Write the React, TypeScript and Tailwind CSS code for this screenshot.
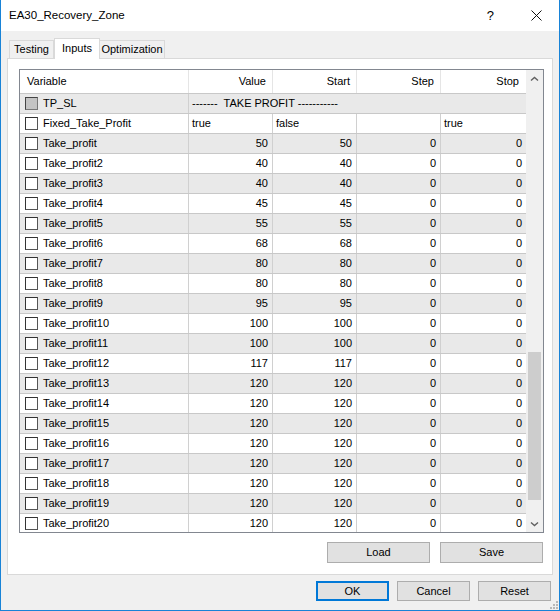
import React from "react";

type Row = { name: string; value: string; start: string; step: string; stop: string; text?: boolean };

const tp: [string, number][] = [
  ["Take_profit", 50],
  ["Take_profit2", 40],
  ["Take_profit3", 40],
  ["Take_profit4", 45],
  ["Take_profit5", 55],
  ["Take_profit6", 68],
  ["Take_profit7", 80],
  ["Take_profit8", 80],
  ["Take_profit9", 95],
  ["Take_profit10", 100],
  ["Take_profit11", 100],
  ["Take_profit12", 117],
  ["Take_profit13", 120],
  ["Take_profit14", 120],
  ["Take_profit15", 120],
  ["Take_profit16", 120],
  ["Take_profit17", 120],
  ["Take_profit18", 120],
  ["Take_profit19", 120],
  ["Take_profit20", 120],
];

const rows: Row[] = [
  { name: "Fixed_Take_Profit", value: "true", start: "false", step: "", stop: "true", text: true },
  ...tp.map(([n, v]) => ({ name: n, value: String(v), start: String(v), step: "0", stop: "0" })),
];

function Check({ gray }: { gray?: boolean }) {
  return (
    <div
      className={
        gray
          ? "w-[13px] h-[13px] shrink-0 border border-t-[#444] border-l-[#444] border-r-[#777] border-b-[#777] bg-[#c4c4c4]"
          : "w-[13px] h-[13px] shrink-0 border border-t-[#333] border-l-[#333] border-r-[#555] border-b-[#555] bg-white"
      }
    />
  );
}

function Chevron({ down }: { down?: boolean }) {
  return (
    <svg width="9" height="6" viewBox="0 0 9 6">
      <path
        d={down ? "M1 1.5 L4.5 4.5 L8 1.5" : "M1 4.5 L4.5 1.5 L8 4.5"}
        fill="none"
        stroke="#606060"
        strokeWidth="1.4"
      />
    </svg>
  );
}

export default function App() {
  return (
    <div className="relative w-[560px] h-[611px] flex flex-col border-x border-b border-[#1883d7] bg-[#f0f0f0] font-['Liberation_Sans',Arial,sans-serif] text-[11px] text-black overflow-hidden">
      {/* Title bar */}
      <div className="h-[31px] shrink-0 bg-white flex items-center pl-[8px] pr-[17px]">
        <span className="text-[11.5px]">EA30_Recovery_Zone</span>
        <div className="flex-1" />
        <span className="text-[13px] mr-[37px] leading-none">?</span>
        <svg width="11" height="11" viewBox="0 0 11 11">
          <path d="M0.5 0.5 L10.5 10.5 M10.5 0.5 L0.5 10.5" stroke="#111" strokeWidth="1" />
        </svg>
      </div>

      {/* Tabs */}
      <div className="h-[27px] shrink-0 flex items-end pt-[7px] pl-[8px]">
        <div className="w-[45px] h-[18px] border border-b-0 border-[#d9d9d9] flex items-center justify-center">
          Testing
        </div>
        <div className="relative w-[46px] h-[21px] -mb-px bg-white border border-b-0 border-[#d9d9d9] flex items-center justify-center pb-[2px]">
          Inputs
        </div>
        <div className="w-[65px] h-[18px] border border-b-0 border-l-0 border-[#d9d9d9] flex items-center justify-center">
          Optimization
        </div>
      </div>

      {/* Panel */}
      <div className="mx-[6px] h-[517px] shrink-0 border border-[#d9d9d9] bg-white flex flex-col pt-[10px] pl-[11px] pr-[8px]">
        <div className="h-[464px] shrink-0 border border-[#828790] flex">
          <div className="flex-1 h-[462px] overflow-hidden flex flex-col">
            {/* header */}
            <div className="grid grid-cols-[169px_84px_84px_84px_85px] h-[23px] shrink-0 bg-white">
              <div className="border-r border-[#e5e5e5] flex items-center pl-[7px]">Variable</div>
              <div className="border-r border-[#e5e5e5] flex items-center justify-end pr-[6px]">Value</div>
              <div className="border-r border-[#e5e5e5] flex items-center justify-end pr-[6px]">Start</div>
              <div className="border-r border-[#e5e5e5] flex items-center justify-end pr-[6px]">Step</div>
              <div className="flex items-center justify-end pr-[7px]">Stop</div>
            </div>
            {/* TP_SL group row */}
            <div className="grid grid-cols-[169px_84px_84px_84px_85px] h-[20px] shrink-0 border-t border-[#c8c8c8] bg-[#e9e9e9]">
              <div className="border-r border-[#d0d0d0] flex items-center pl-[5px]">
                <Check gray />
                <span className="ml-[5px]">TP_SL</span>
              </div>
              <div className="col-span-4 flex items-center pl-[3px] whitespace-pre">
                {"-------  TAKE PROFIT -----------"}
              </div>
            </div>
            {rows.map((r, i) => (
              <div
                key={r.name}
                className={
                  "grid grid-cols-[169px_84px_84px_84px_85px] h-[20px] shrink-0 border-t border-[#c8c8c8] " +
                  (i % 2 === 1 ? "bg-[#e9e9e9]" : "bg-white")
                }
              >
                <div className="border-r border-[#d0d0d0] flex items-center pl-[5px]">
                  <Check />
                  <span className="ml-[5px]">{r.name}</span>
                </div>
                {[r.value, r.start, r.step, r.stop].map((v, j) => (
                  <div
                    key={j}
                    className={
                      (j < 3 ? "border-r border-[#d0d0d0] " : "") +
                      (r.text ? "flex items-center pl-[3px]" : "flex items-center justify-end pr-[4px]")
                    }
                  >
                    {v}
                  </div>
                ))}
              </div>
            ))}
          </div>
          {/* scrollbar */}
          <div className="w-[17px] h-[462px] shrink-0 bg-[#f0f0f0] flex flex-col">
            <div className="h-[17px] shrink-0 flex items-center justify-center">
              <Chevron />
            </div>
            <div className="h-[265px] shrink-0" />
            <div className="h-[148px] shrink-0 mx-[2px] bg-[#cdcdcd]" />
            <div className="flex-1" />
            <div className="h-[17px] shrink-0 flex items-center justify-center">
              <Chevron down />
            </div>
          </div>
        </div>
        <div className="mt-[9px] flex justify-end gap-[10px] pr-[1px]">
          <div className="w-[103px] h-[21px] bg-[#e1e1e1] border border-[#adadad] flex items-center justify-center">
            Load
          </div>
          <div className="w-[103px] h-[21px] bg-[#e1e1e1] border border-[#adadad] flex items-center justify-center">
            Save
          </div>
        </div>
      </div>

      {/* Bottom buttons */}
      <div className="mt-[6px] flex justify-end gap-[8px] pr-[8px]">
        <div className="w-[73px] h-[20px] bg-[#e1e1e1] border-2 border-[#0078d7] flex items-center justify-center">
          OK
        </div>
        <div className="w-[73px] h-[20px] bg-[#e1e1e1] border border-[#adadad] flex items-center justify-center">
          Cancel
        </div>
        <div className="w-[73px] h-[20px] bg-[#e1e1e1] border border-[#adadad] flex items-center justify-center">
          Reset
        </div>
      </div>

      {/* resize grip */}
      <svg className="absolute right-[1px] bottom-[1px]" width="9" height="9" viewBox="0 0 9 9">
        <rect x="7" y="1" width="2" height="2" fill="#b8b8b8" />
        <rect x="4" y="4" width="2" height="2" fill="#b8b8b8" />
        <rect x="7" y="4" width="2" height="2" fill="#b8b8b8" />
        <rect x="1" y="7" width="2" height="2" fill="#b8b8b8" />
        <rect x="4" y="7" width="2" height="2" fill="#b8b8b8" />
        <rect x="7" y="7" width="2" height="2" fill="#b8b8b8" />
      </svg>
    </div>
  );
}
